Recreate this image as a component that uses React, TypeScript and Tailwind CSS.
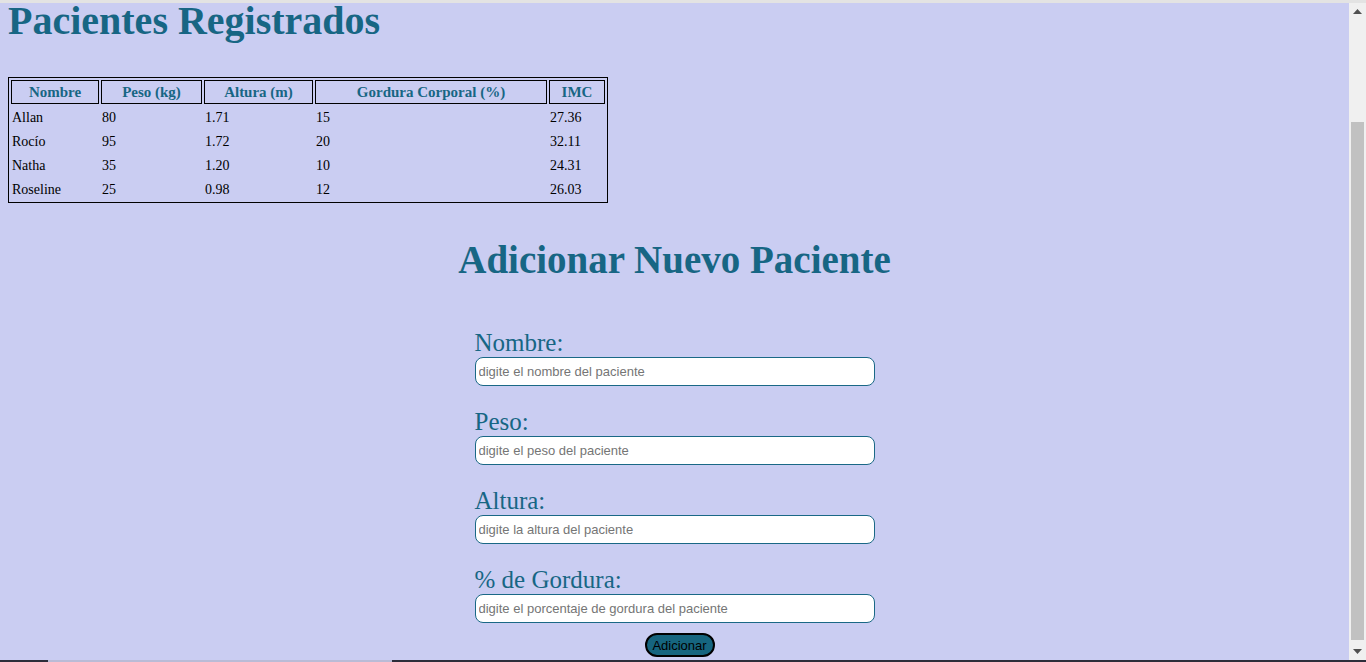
const pacientes = [
  { nombre: 'Allan', peso: '80', altura: '1.71', gordura: '15', imc: '27.36' },
  { nombre: 'Rocío', peso: '95', altura: '1.72', gordura: '20', imc: '32.11' },
  { nombre: 'Natha', peso: '35', altura: '1.20', gordura: '10', imc: '24.31' },
  { nombre: 'Roseline', peso: '25', altura: '0.98', gordura: '12', imc: '26.03' },
];

const campos = [
  { label: 'Nombre:', placeholder: 'digite el nombre del paciente' },
  { label: 'Peso:', placeholder: 'digite el peso del paciente' },
  { label: 'Altura:', placeholder: 'digite la altura del paciente' },
  { label: '% de Gordura:', placeholder: 'digite el porcentaje de gordura del paciente' },
];

const serif = "font-['Liberation_Serif','Times_New_Roman',serif]";
const sans = "font-['Liberation_Sans',Arial,sans-serif]";

function Scrollbar() {
  return (
    <div className="flex w-[17px] flex-col bg-[#f0f0f0]">
      <div className="flex h-[17px] items-center justify-center">
        <svg width="9" height="5" viewBox="0 0 9 5">
          <path d="M0 5 L4.5 0 L9 5 Z" fill="#505050" />
        </svg>
      </div>
      <div className="flex flex-1 flex-col px-[2px] pt-[102px] pb-[3px]">
        <div className="flex-1 bg-[#c1c1c1]" />
      </div>
      <div className="flex h-[17px] items-center justify-center">
        <svg width="9" height="5" viewBox="0 0 9 5">
          <path d="M0 0 L9 0 L4.5 5 Z" fill="#505050" />
        </svg>
      </div>
    </div>
  );
}

export default function App() {
  return (
    <div className="flex h-[662px] w-[1366px] flex-col overflow-hidden bg-[#cacdf2]">
      <div className="h-[3px] bg-[#e3e3e3]" />

      <div className="flex min-h-0 flex-1">
        <main className="flex min-w-0 flex-1 flex-col">
          <h1 className={`${serif} ml-[8px] text-[40px] leading-[36px] font-bold text-[#176684]`}>
            Pacientes Registrados
          </h1>

          <table
            className={`${serif} mt-[38px] ml-[8px] w-[600px] border-separate border-spacing-[2px] border border-black text-[14px]`}
          >
            <thead>
              <tr className="text-[15px] leading-[20px] text-[#176684]">
                <th className="h-[24px] w-[88px] border border-black p-0 font-bold">Nombre</th>
                <th className="w-[101px] border border-black p-0 font-bold">Peso (kg)</th>
                <th className="w-[109px] border border-black p-0 font-bold">Altura (m)</th>
                <th className="w-[232px] border border-black p-0 font-bold">Gordura Corporal (%)</th>
                <th className="border border-black p-0 font-bold">IMC</th>
              </tr>
            </thead>
            <tbody className="text-black">
              {pacientes.map((p) => (
                <tr key={p.nombre}>
                  <td className="h-[22px] px-[1px] py-0">{p.nombre}</td>
                  <td className="px-[1px] py-0">{p.peso}</td>
                  <td className="px-[1px] py-0">{p.altura}</td>
                  <td className="px-[1px] py-0">{p.gordura}</td>
                  <td className="px-[1px] py-0">{p.imc}</td>
                </tr>
              ))}
            </tbody>
          </table>

          <h2
            className={`${serif} mt-[37px] text-center text-[39px] leading-[40px] font-bold text-[#176684]`}
          >
            Adicionar Nuevo Paciente
          </h2>

          <form className="mx-auto mt-[48px] flex w-[400px] flex-col gap-[21px]">
            {campos.map((c) => (
              <label key={c.label} className="flex flex-col">
                <span className={`${serif} text-[25px] leading-[29px] text-[#176684]`}>{c.label}</span>
                <input
                  type="text"
                  placeholder={c.placeholder}
                  className={`${sans} h-[29px] w-[400px] rounded-[8px] border border-[#1a6886] bg-white px-[3px] text-[13px] text-black outline-none placeholder:text-[#757575]`}
                />
              </label>
            ))}
          </form>

          <div className="mt-[10px] flex justify-center pl-[10px]">
            <button
              type="button"
              className={`${sans} h-[24px] w-[70px] rounded-full border-2 border-black bg-[#16657f] text-[13px] leading-none text-black`}
            >
              Adicionar
            </button>
          </div>
        </main>

        <Scrollbar />
      </div>

      <div className="flex h-[2px]">
        <div className="w-[48px] bg-[#2d2d3a]" />
        <div className="w-[344px] bg-[#b9bbd6]" />
        <div className="flex-1 bg-[#2d2d3a]" />
      </div>
    </div>
  );
}
